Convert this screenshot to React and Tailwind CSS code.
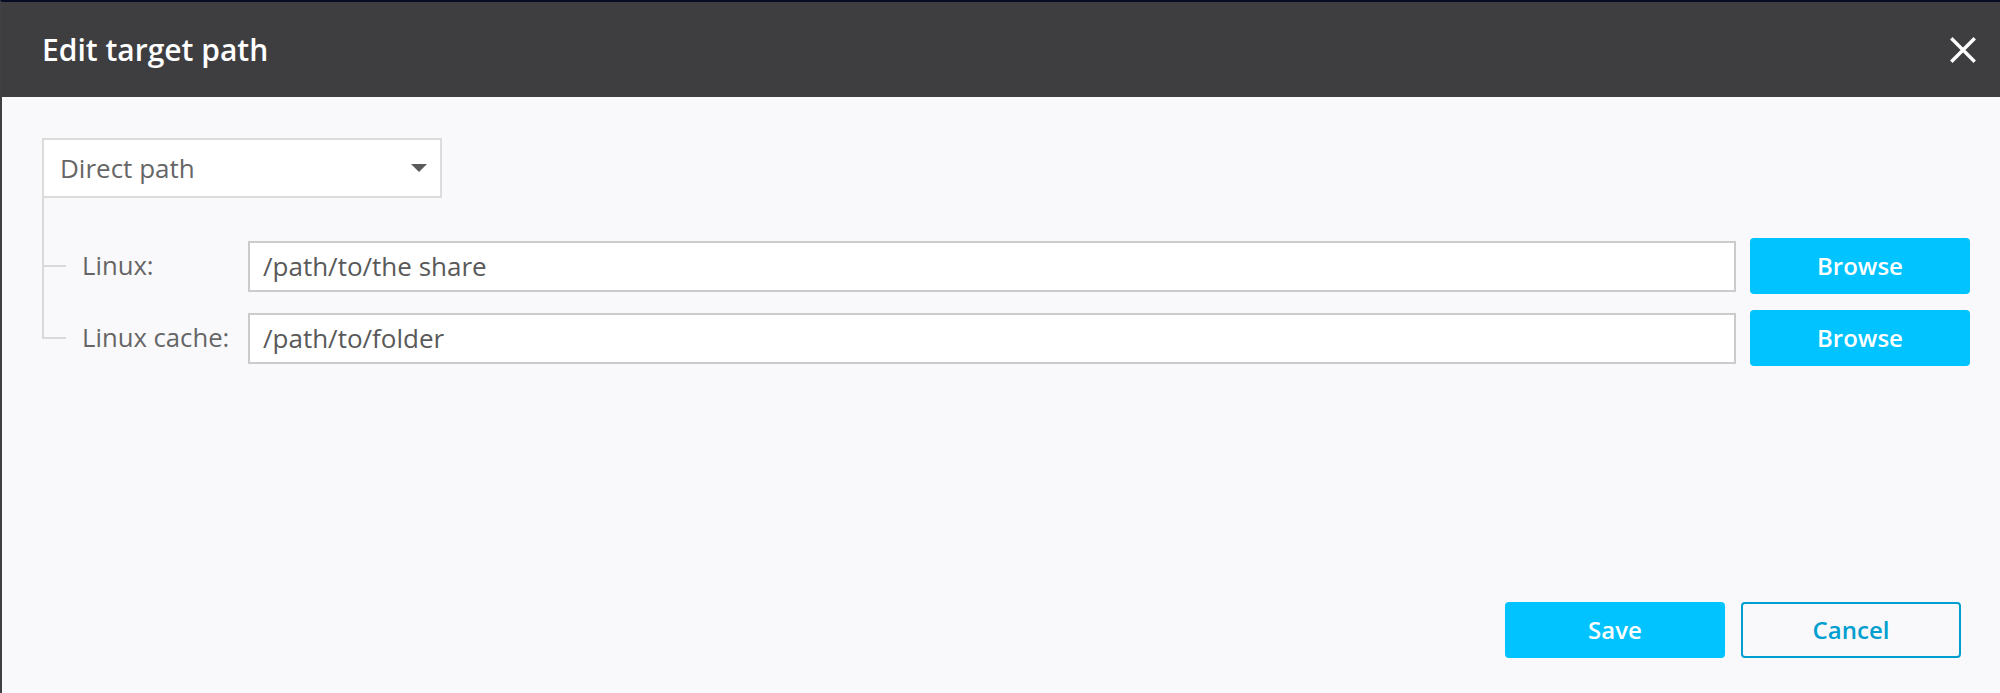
const paths = [
  { label: 'Linux:', value: '/path/to/the share', last: false },
  { label: 'Linux cache:', value: '/path/to/folder', last: true },
];

function CloseIcon() {
  return (
    <svg width="26" height="26" viewBox="0 0 26 26" fill="none" aria-hidden="true">
      <path d="M2.5 2.5L23.5 23.5M23.5 2.5L2.5 23.5" stroke="#fff" strokeWidth="3.4" strokeLinecap="square" />
    </svg>
  );
}

function Caret() {
  return (
    <svg width="16" height="8" viewBox="0 0 16 8" aria-hidden="true">
      <path d="M0 0H16L8 8Z" fill="#5a5a5a" />
    </svg>
  );
}

function PathRow({ label, value, last }) {
  return (
    <div className="flex h-[56px] items-stretch">
      <div className="flex w-[24px] flex-col">
        <div className="h-[29px] border-b-2 border-l-2 border-[#d9d9d9]" />
        <div className={`flex-1 ${last ? '' : 'border-l-2 border-[#d9d9d9]'}`} />
      </div>
      <div className="ml-[16px] flex w-[166px] items-center text-[25.7px] text-[#666]">{label}</div>
      <div className="flex flex-1 items-center">
        <div className="flex h-[51px] w-full items-center border-2 border-[#cbcbcb] bg-white pl-[13px] text-[26px] text-[#595959]">
          {value}
        </div>
      </div>
      <button
        type="button"
        className="ml-[14px] w-[220px] rounded-[4px] bg-[#00c3ff] text-[24px] font-semibold text-white"
      >
        Browse
      </button>
    </div>
  );
}

export default function App() {
  return (
    <div className="flex h-[693px] w-[2000px] flex-col overflow-hidden border-l-2 border-t-2 border-l-[#404044] border-t-[#070b24] font-['Open_Sans',sans-serif]">
      <div className="flex h-[95px] shrink-0 items-center justify-between bg-[#3e3e41] pl-[40px] pr-[24px]">
        <h1 className="text-[30px] font-semibold text-white">Edit target path</h1>
        <CloseIcon />
      </div>

      <div className="flex flex-1 flex-col bg-[#f9f9fb] pl-[40px] pr-[30px] pt-[41px]">
        <div className="flex h-[60px] w-[400px] items-center justify-between border-2 border-[#dcdcdc] bg-white pl-[16px] pr-[13px] text-[26px] text-[#666]">
          <span>Direct path</span>
          <Caret />
        </div>

        <div className="flex flex-col">
          <div className="h-[40px] border-l-2 border-[#d9d9d9]" />
          <PathRow {...paths[0]} />
          <div className="h-[16px] border-l-2 border-[#d9d9d9]" />
          <PathRow {...paths[1]} />
        </div>

        <div className="mt-auto flex justify-end gap-[16px] pb-[35px] pr-[9px]">
          <button
            type="button"
            className="h-[56px] w-[220px] rounded-[4px] bg-[#00c3ff] text-[24px] font-semibold text-white"
          >
            Save
          </button>
          <button
            type="button"
            className="h-[56px] w-[220px] rounded-[4px] border-2 border-[#009fd0] text-[24px] font-semibold text-[#009fd0]"
          >
            Cancel
          </button>
        </div>
      </div>
    </div>
  );
}
